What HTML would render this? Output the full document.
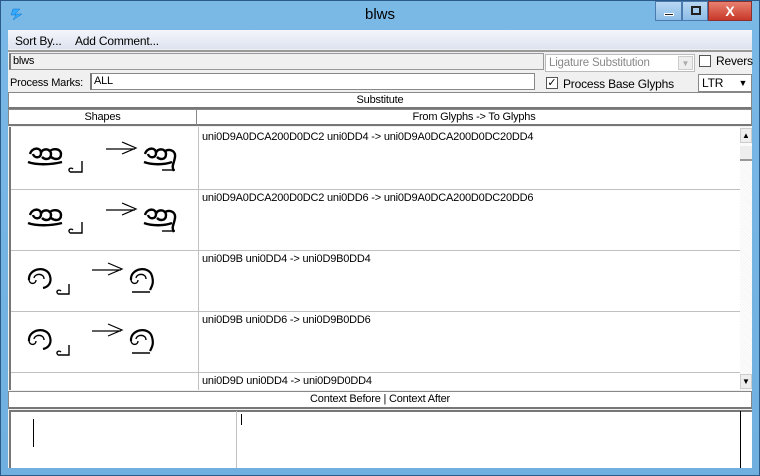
<!DOCTYPE html><html><head><style>
*{margin:0;padding:0;box-sizing:border-box}
body{width:760px;height:476px;overflow:hidden;background:#6fb0e0;font-family:"Liberation Sans",sans-serif;font-size:11px;color:#000;position:relative}
.a{position:absolute}
.t{font-size:11px;white-space:nowrap;letter-spacing:-0.2px}
.hd{background:#fff;border:1px solid #888;border-bottom:2px solid #777;text-align:center;line-height:14px;letter-spacing:-0.2px}
svg.g{position:absolute}
</style></head><body>
<div class="a" style="left:0;top:0;width:760px;height:476px;border:1px solid #2a5a88;background:linear-gradient(#7ab8e6,#6fb0e0)"></div>
<svg class="a" style="left:10px;top:7px" width="14" height="14"><path d="M3 2l7 0-5 5h7l-9 6 3-5H1z" fill="#3af" stroke="#17c" stroke-width="0.5"/></svg>
<div class="a" style="left:0;width:760px;top:6px;text-align:center;font-size:15px;color:#000">blws</div>
<div class="a" style="left:655px;top:1px;width:27px;height:20px;border:1px solid #4a7ab0;background:linear-gradient(#b8d8f2,#8cbce6)"><div class="a" style="left:8px;top:11px;width:10px;height:3px;background:#222;border:1px solid #fff"></div></div>
<div class="a" style="left:682px;top:1px;width:26px;height:20px;border:1px solid #4a7ab0;background:linear-gradient(#b8d8f2,#8cbce6)"><div class="a" style="left:8px;top:4px;width:10px;height:9px;border:2px solid #222"></div></div>
<div class="a" style="left:708px;top:1px;width:44px;height:20px;border:1px solid #8a3030;background:linear-gradient(#e88070,#c83828);color:#fff;font-weight:bold;font-size:14px;text-align:center;line-height:18px">X</div>
<div class="a" style="left:8px;top:30px;width:744px;height:438px;background:#f0f0f0"></div>
<div class="a" style="left:8px;top:30px;width:744px;height:19px;background:linear-gradient(#f4f6fb,#dde3f0)"></div>
<div class="a t" style="left:15px;top:34px;font-size:12px">Sort By...</div>
<div class="a t" style="left:75px;top:34px;font-size:12px">Add Comment...</div>
<div class="a" style="left:8px;top:50px;width:744px;height:2px;background:#999"></div>
<div class="a t" style="left:9px;top:53px;width:535px;height:17px;border:1px solid #999;border-left:2px solid #777;background:#f0f0f0;padding-left:2px;line-height:15px">blws</div>
<div class="a t" style="left:10px;top:77px">Process Marks:</div>
<div class="a t" style="left:90px;top:73px;width:445px;height:17px;border:1px solid #888;border-left:2px solid #777;background:#fff;padding-left:2px;line-height:14px">ALL</div>
<div class="a t" style="left:545px;top:54px;width:150px;height:18px;border:1px solid #bbb;background:#fff;color:#888;padding-left:3px;line-height:17px;font-size:11.5px">Ligature Substitution</div>
<div class="a" style="left:678px;top:56px;width:15px;height:14px;background:#eee;border:1px solid #ccc;color:#aaa;font-size:8px;text-align:center;line-height:13px">▼</div>
<div class="a" style="left:699px;top:55px;width:12px;height:12px;border:1px solid #555;background:#fff"></div>
<div class="a t" style="left:716px;top:54px;font-size:12px">Revers</div>
<div class="a" style="left:546px;top:77px;width:12px;height:12px;border:1px solid #555;background:#fff;font-size:11px;line-height:10px;text-align:center">✓</div>
<div class="a t" style="left:563px;top:77px;font-size:12px">Process Base Glyphs</div>
<div class="a t" style="left:698px;top:74px;width:54px;height:18px;border:1px solid #888;background:#fff;padding-left:3px;line-height:16px;font-size:12px">LTR</div>
<div class="a" style="left:736px;top:76px;width:14px;height:14px;font-size:9px;text-align:center;line-height:14px">▼</div>
<div class="a hd" style="left:8px;top:92px;width:744px;height:17px">Substitute</div>
<div class="a hd" style="left:8px;top:109px;width:189px;height:17px">Shapes</div>
<div class="a hd" style="left:196px;top:109px;width:556px;height:17px">From Glyphs -&gt; To Glyphs</div>
<div class="a" style="left:9px;top:127px;width:743px;height:263px;background:#fff;border-left:2px solid #777"></div>
<div class="a" style="left:198px;top:127px;width:1px;height:263px;background:#c0c0c0"></div>
<div class="a" style="left:11px;top:189px;width:729px;height:1px;background:#c0c0c0"></div>
<div class="a" style="left:11px;top:250px;width:729px;height:1px;background:#c0c0c0"></div>
<div class="a" style="left:11px;top:311px;width:729px;height:1px;background:#c0c0c0"></div>
<div class="a" style="left:11px;top:372px;width:729px;height:1px;background:#c0c0c0"></div>
<div class="a t" style="left:202px;top:131px">uni0D9A0DCA200D0DC2 uni0DD4 -&gt; uni0D9A0DCA200D0DC20DD4</div>
<div class="a t" style="left:202px;top:192px">uni0D9A0DCA200D0DC2 uni0DD6 -&gt; uni0D9A0DCA200D0DC20DD6</div>
<div class="a t" style="left:202px;top:253px">uni0D9B uni0DD4 -&gt; uni0D9B0DD4</div>
<div class="a t" style="left:202px;top:314px">uni0D9B uni0DD6 -&gt; uni0D9B0DD6</div>
<div class="a t" style="left:202px;top:375px">uni0D9D uni0DD4 -&gt; uni0D9D0DD4</div>
<div class="a" style="left:740px;top:127px;width:12px;height:263px;background:repeating-linear-gradient(45deg,#f4f4f4 0 1px,#fff 1px 2px)"></div>
<div class="a" style="left:740px;top:128px;width:12px;height:15px;background:#eee;border:1px solid #ccc;font-size:8px;text-align:center;line-height:13px">▲</div>
<div class="a" style="left:740px;top:146px;width:12px;height:15px;background:#eee;border-bottom:2px solid #999"></div>
<div class="a" style="left:740px;top:374px;width:12px;height:15px;background:#eee;border:1px solid #ccc;font-size:8px;text-align:center;line-height:13px">▼</div>
<svg class="g" style="left:10px;top:127px" width="188" height="263" fill="none" stroke="#000">
<g id="r1">
<g stroke-width="2.4"><path d="M20 27c2-7 11-7 11-1s-7 5-8 1M31 26c1-5 10-5 10 1s-6 6-9 3M39 25c3-4 12-4 12 2s-6 6-10 3M18 35c8 3 22 3 34 0"/></g>
<path stroke-width="1.4" d="M60 45h12v-11M60 45c-3-3 1-5 3-3"/>
<path stroke-width="1.2" d="M96 22h29M112 15l14 6-14 6"/>
<g stroke-width="2.4"><path d="M135 27c2-7 11-7 11-1s-7 5-8 1M146 26c1-5 10-5 10 1s-6 6-9 3M154 25c4-4 12-2 11 5s-4 9-1 14M134 35c8 3 20 3 28 0"/></g>
<path stroke-width="1.4" d="M152 43h13"/>
</g>
<use href="#r1" y="61"/>
<g id="r3">
<path stroke-width="2.2" d="M19 153c-1-12 18-15 21-4 2 7-2 11-7 12"/>
<path stroke-width="1.4" d="M24 151c1-5 10-5 10 1M19 153c1 5 7 4 7 0"/>
<path stroke-width="1.4" d="M48 167h11v-10M48 167c-3-3 1-5 3-3"/>
<path stroke-width="1.2" d="M82 143h29M98 136l14 6-14 6"/>
<path stroke-width="2.2" d="M121 153c-1-12 18-15 21-4 2 7 0 10-2 14"/>
<path stroke-width="1.4" d="M126 151c1-5 10-5 10 1M121 153c1 5 7 4 7 0M122 165h18"/>
</g>
<use href="#r3" y="61"/>
</svg>
<div class="a hd" style="left:8px;top:391px;width:744px;height:18px">Context Before | Context After</div>
<div class="a" style="left:9px;top:410px;width:743px;height:58px;background:#fff;border-top:2px solid #777;border-left:2px solid #777"></div>
<div class="a" style="left:236px;top:411px;width:1px;height:57px;background:#c0c0c0"></div>
<div class="a" style="left:740px;top:411px;width:1px;height:57px;background:#000"></div>
<div class="a" style="left:33px;top:419px;width:1px;height:28px;background:#000"></div>
<div class="a" style="left:241px;top:414px;width:1px;height:11px;background:#000"></div>
</body></html>
